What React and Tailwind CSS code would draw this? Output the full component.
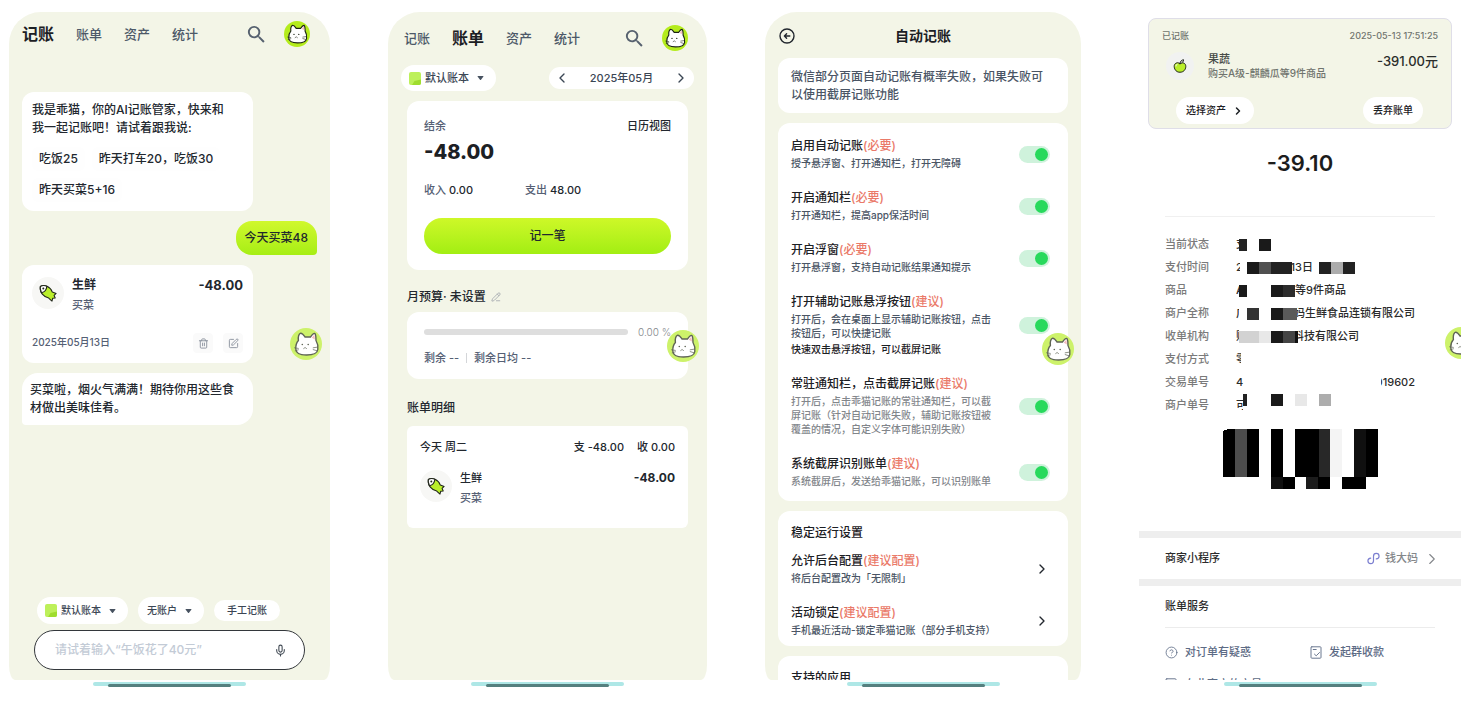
import { MdSearch } from 'react-icons/md';
import { ChevronLeft, ChevronRight, CircleHelp, Mic, PencilLine, SquarePen, Trash2 } from 'lucide-react';

const TABS = ['记账', '账单', '资产', '统计'];

const SETTINGS = [
    { id: 'auto', title: '启用自动记账', tag: '(必要)', desc: '授予悬浮窗、打开通知栏，打开无障碍' },
    { id: 'notice', title: '开启通知栏', tag: '(必要)', desc: '打开通知栏，提高app保活时间' },
    { id: 'float', title: '开启浮窗', tag: '(必要)', desc: '打开悬浮窗，支持自动记账结果通知提示' },
    {
        id: 'assist',
        title: '打开辅助记账悬浮按钮',
        tag: '(建议)',
        desc: '打开后，会在桌面上显示辅助记账按钮，点击\n按钮后，可以快捷记账',
        extra: '快速双击悬浮按钮，可以截屏记账',
    },
    {
        id: 'resident',
        title: '常驻通知栏，点击截屏记账',
        tag: '(建议)',
        desc: '打开后，点击乖猫记账的常驻通知栏，可以截\n屏记账（针对自动记账失败，辅助记账按钮被\n覆盖的情况，自定义字体可能识别失败）',
        muted: true,
    },
    { id: 'system', title: '系统截屏识别账单', tag: '(建议)', desc: '系统截屏后，发送给乖猫记账，可以识别账单', muted: true },
];

const STABILITY = [
    { title: '允许后台配置', tag: '(建议配置)', desc: '将后台配置改为「无限制」' },
    { title: '活动锁定', tag: '(建议配置)', desc: '手机最近活动-锁定乖猫记账（部分手机支持）' },
];

// each value is a run of cells: text (optionally cut to a width), mosaic block, or gap
const DETAILS = [
    { label: '当前状态', cells: [{ text: '支', w: 3 }, { w: 8, c: '#222' }, { w: 12 }, { w: 12, c: '#1a1a1a' }] },
    {
        label: '支付时间',
        cells: [
            { text: '2', w: 4 }, { w: 7 }, { w: 12, c: '#1a1a1a' }, { w: 12, c: '#505050' }, { w: 21, c: '#222' },
            { text: '13日', w: 21, end: true }, { w: 6 }, { w: 12, c: '#222' }, { w: 12, c: '#acacac' }, { w: 12, c: '#222' },
        ],
    },
    {
        label: '商品',
        cells: [{ text: 'A', w: 3 }, { w: 8, c: '#1a1a1a' }, { w: 24 }, { w: 12, c: '#1a1a1a' }, { w: 12, c: '#2c2c2c' }, { text: '等9件商品' }],
    },
    {
        label: '商户全称',
        cells: [
            { text: '广', w: 3 }, { w: 8 }, { w: 12, c: '#333' }, { w: 12 }, { w: 12, c: '#1a1a1a' }, { w: 14, c: '#5a5a5a' },
            { text: '妈生鲜食品连锁有限公司', w: 118, end: true },
        ],
    },
    {
        label: '收单机构',
        cells: [
            { text: '财', w: 3 }, { w: 20, c: '#d2d2d2' }, { w: 12, c: '#e8e8e8' }, { w: 12, c: '#1a1a1a' }, { w: 12, c: '#444' }, { w: 3, c: '#111' },
            { text: '科技有限公司', w: 61, end: true },
        ],
    },
    { label: '支付方式', cells: [{ text: '零', w: 5 }] },
    { label: '交易单号', cells: [{ text: '4', w: 8 }, { w: 137 }, { text: '019602', w: 34, end: true }] },
    {
        label: '商户单号',
        raised: true,
        cells: [
            { text: '可', w: 7 }, { w: 4, c: '#222' }, { w: 24 }, { w: 12, c: '#1a1a1a' }, { w: 12 },
            { w: 12, c: '#e8e8e8' }, { w: 12 }, { w: 12, c: '#adadad' },
        ],
    },
];

function Cat({ className, bg = '#b4ec1c', line = '#1c2414' }) {
    return (
        <svg viewBox="0 0 32 32" className={className} aria-hidden="true">
            <circle cx="16" cy="16" r="16" fill={bg} />
            <path
                d="M5.800 21C5.600 17 7 14 8.400 12.500C8 9 8.800 6 10.800 5.200C12.600 5.200 14 7.500 15 9H20.500C21.500 7.500 22.800 5.500 24.600 5.400C26.200 6 25.800 10 26 12.500C27.500 15 28.300 18 27.800 21.500C27.300 25.500 24 27 16.500 27C9 27 6 25.500 5.800 21Z"
                fill="#fff"
                stroke={line}
                strokeWidth="1.400"
                strokeLinejoin="round"
            />
            <path d="M21.800 9.800l2.600-3.200.5 4.900z" fill="#f7bcc0" />
            <circle cx="12.300" cy="16.500" r=".8" fill={line} />
            <circle cx="18.200" cy="16.500" r=".8" fill={line} />
            <path d="M13.700 20.500l1.400-1 1.400 1M4.500 19.800l3.800.6M5.200 22.800l3.200-1M23.200 19.800l3.800-.6M23.200 21.600l3.800 1.200" fill="none" stroke={line} strokeWidth=".7" strokeLinecap="round" />
        </svg>
    );
}

function FloatingCat({ className }) {
    return (
        <button aria-label="乖猫助手" className={`absolute size-8 ${className}`}>
            <Cat className="size-8" bg="#cdf26a" line="#5f6455" />
        </button>
    );
}

function Fish() {
    return (
        <span className="flex size-8 shrink-0 items-center justify-center rounded-full bg-[#f7f7f5]">
            <svg viewBox="0 0 20 20" className="size-[18px]" fill="none" stroke="#20251a" strokeWidth="1.200" strokeLinejoin="round" strokeLinecap="round">
                <path d="M1.500 2.800C5.500 .3 12.500 2.500 14.800 9l4.200 1.500-2.200 2.200 1.200 2.800-2.800.4-.8 3.100-3.600-3.400C5.500 14.500 .2 9.500 1.500 2.800Z" fill="#b9ee2a" />
                <path d="M1.500 2.800C3.500 1.500 6.500 1.500 8.700 2.400 8.500 6 6.500 8.700 2.800 9.800 1.600 7.500 1.100 5.200 1.500 2.800Z" fill="#fff" />
                <circle cx="4.800" cy="4.900" r=".5" fill="#20251a" />
            </svg>
        </span>
    );
}

function Apple() {
    return (
        <span className="flex size-7 shrink-0 items-center justify-center rounded-full bg-[#f1f2f1]">
            <svg viewBox="0 0 16 16" className="size-4" stroke="#20251a" strokeLinejoin="round" strokeLinecap="round">
                <path d="M8 5.500C5.500 3.800 2 5 2.200 8.600 2.400 12 5 14.500 8 14.200c3.200.2 5.700-2.300 5.800-5.600C13.900 5 10.500 3.800 8 5.500Z" fill="#b9ee2a" />
                <path d="M8 5.500C8.200 3.500 9.500 2 11.500 1.700c.2 1.800-1.200 3.400-3.500 3.800Z" fill="#fff" />
                <path d="M4 8c0-1 .5-1.600 1.200-1.800" fill="none" stroke="#fff" />
            </svg>
        </span>
    );
}

function Caret() {
    return (
        <svg viewBox="0 0 8 5" className="ml-1 h-[4px] w-[7px] shrink-0" aria-hidden="true">
            <path d="M.8 0h6.400q.8.300.3 1L4.600 4.600q-.6.500-1.200 0L.5 1Q0 .3.800 0Z" fill="#475260" />
        </svg>
    );
}

function LedgerIcon() {
    return (
        <svg viewBox="0 0 12 13" className="h-[13px] w-3 shrink-0" aria-hidden="true">
            <rect width="12" height="13" rx="2" fill="#bdf05a" />
            <path d="M3 13l2.500-4L12 7.500V11a2 2 0 0 1-2 2Z" fill="#9fdd2e" />
        </svg>
    );
}

function Phone({ children, className = '' }) {
    return (
        <section className="flex min-h-0 min-w-0 flex-col items-center">
            <div className={`relative flex min-h-0 w-full flex-1 flex-col overflow-hidden ${className}`}>{children}</div>
            <div className="relative mt-0.5 h-1 w-[153px] shrink-0 rounded-full bg-[#aee7e6]">
                <div className="absolute inset-x-[15px] top-0.5 h-[3px] rounded-full bg-[#55807f]" />
            </div>
        </section>
    );
}

const FRAME = 'bg-[#f3f5e7] rounded-t-[32px] rounded-bl-[6px_15px] rounded-br-[6px_15px]';

function TopNav({ active, className }) {
    return (
        <header className={`flex items-center ${className}`}>
            <nav className="flex items-center gap-[22px]">
                {TABS.map((tab) => (
                    <a
                        key={tab}
                        href="#"
                        className={tab === active ? 'text-base leading-6 font-bold text-[#1c2024]' : 'text-[13px] leading-6 text-[#4d5968]'}
                    >
                        {tab}
                    </a>
                ))}
            </nav>
            <button aria-label="搜索" className="ml-auto">
                <MdSearch size={23} color="#56616f" />
            </button>
            <button aria-label="我的" className="ml-4">
                <Cat className="size-[26px]" />
            </button>
        </header>
    );
}

function PillSelect({ label, option, icon, className }) {
    return (
        <label className={`flex items-center gap-1 rounded-full bg-white text-[#3b4654] ${className}`}>
            {icon}
            <select aria-label={label} className="appearance-none bg-transparent outline-none">
                <option>{option}</option>
            </select>
            <Caret />
        </label>
    );
}

function ChatScreen() {
    return (
        <Phone className={FRAME}>
            <TopNav active="记账" className="pt-[9px] pr-5 pl-[13px]" />
            <main className="mt-[45px] flex flex-1 flex-col px-[13px] text-xs text-[#22272e]">
                <div className="w-[231px] rounded-xl bg-white px-2.5 py-[9px]">
                    <p className="leading-[18px] whitespace-nowrap">
                        我是乖猫，你的AI记账管家，快来和
                        <br />
                        我一起记账吧！请试着跟我说:
                    </p>
                    <div className="mt-2.5 flex flex-wrap gap-[7px]">
                        {['吃饭25', '昨天打车20，吃饭30', '昨天买菜5+16'].map((text) => (
                            <button key={text} className="h-6 rounded-md bg-[#fefefe] px-[7px] whitespace-nowrap">{text}</button>
                        ))}
                    </div>
                </div>
                <p className="mt-2.5 self-end rounded-2xl rounded-br-[4px] bg-linear-to-b from-[#d0f82c] to-[#a6ee14] px-[9px] py-2 leading-[18px]">
                    今天买菜48
                </p>
                <article className="mt-2.5 w-[231px] rounded-xl bg-white px-2.5 pt-3 pb-2.5">
                    <div className="flex items-start">
                        <Fish />
                        <div className="ml-2">
                            <h3 className="leading-4 font-bold">生鲜</h3>
                            <p className="mt-1 text-[11px] leading-4 text-[#556074]">买菜</p>
                        </div>
                        <strong className="ml-auto text-[13px] leading-4">-48.00</strong>
                    </div>
                    <div className="mt-5 flex items-center">
                        <time className="text-[10px] text-[#556074]">2025年05月13日</time>
                        <button aria-label="删除" className="ml-auto flex size-5 items-center justify-center rounded bg-[#fafafa] text-[#8a919c]">
                            <Trash2 size={11} />
                        </button>
                        <button aria-label="编辑" className="ml-2.5 flex size-5 items-center justify-center rounded bg-[#fafafa] text-[#8a919c]">
                            <SquarePen size={11} />
                        </button>
                    </div>
                </article>
                <p className="mt-2.5 w-[231px] rounded-2xl rounded-bl-[4px] bg-white px-2 py-2 leading-[18px] whitespace-nowrap">
                    买菜啦，烟火气满满！期待你用这些食
                    <br />
                    材做出美味佳肴。
                </p>
            </main>
            <footer className="px-[25px] pb-2.5">
                <div className="mb-1.5 ml-[3px] flex items-center gap-2.5 text-[10px]">
                    <PillSelect label="账本" option="默认账本" icon={<LedgerIcon />} className="h-[27px] pr-3 pl-2" />
                    <PillSelect label="账户" option="无账户" className="h-[27px] pr-3 pl-[9px]" />
                    <button className="h-[21px] rounded-full bg-white px-[13px] text-[#3b4654]">手工记账</button>
                </div>
                <div className="flex h-10 items-center rounded-full border border-[#33373b] bg-white pr-[17px] pl-5">
                    <input
                        aria-label="记账内容"
                        placeholder="请试着输入“午饭花了40元”"
                        className="min-w-0 flex-1 bg-transparent text-xs outline-none placeholder:text-[#c3cbd6]"
                    />
                    <button aria-label="语音输入">
                        <Mic size={13} color="#3f4852" />
                    </button>
                </div>
            </footer>
            <FloatingCat className="top-[316px] right-2" />
        </Phone>
    );
}

function BillScreen() {
    return (
        <Phone className={FRAME}>
            <TopNav active="账单" className="pt-[13px] pr-[19px] pl-4" />
            <div className="mt-3.5 flex items-center justify-between px-[13px] text-[11px] text-[#3b4654]">
                <PillSelect label="账本" option="默认账本" icon={<LedgerIcon />} className="h-[26px] pr-3 pl-2" />
                <div className="flex h-[22px] w-[145px] items-center justify-between rounded-full bg-white px-[5px]">
                    <button aria-label="上个月"><ChevronLeft size={16} /></button>
                    <span>2025年05月</span>
                    <button aria-label="下个月"><ChevronRight size={16} /></button>
                </div>
            </div>
            <main className="mt-2.5 px-[19px] text-[#22272e]">
                <section className="rounded-xl bg-white px-[17px] py-4">
                    <div className="flex justify-between text-[11px] leading-[18px]">
                        <span className="text-[#556074]">结余</span>
                        <a href="#">日历视图</a>
                    </div>
                    <p className="mt-1 text-xl leading-[26px] font-extrabold text-[#1c2024]">-48.00</p>
                    <dl className="mt-4 grid grid-cols-[101px_1fr] text-[11px] leading-[18px]">
                        <div className="flex gap-[3px]">
                            <dt className="text-[#556074]">收入</dt>
                            <dd>0.00</dd>
                        </div>
                        <div className="flex gap-[3px]">
                            <dt className="text-[#556074]">支出</dt>
                            <dd>48.00</dd>
                        </div>
                    </dl>
                    <button className="mt-[19px] h-9 w-full rounded-full bg-linear-to-b from-[#cef828] to-[#a2ee12] text-xs">记一笔</button>
                </section>
                <h2 className="mt-[18px] flex items-center gap-[5px] text-xs leading-[18px]">
                    月预算· 未设置
                    <button aria-label="编辑预算"><PencilLine size={10} color="#a3a8ae" /></button>
                </h2>
                <section className="mt-1.5 rounded-xl bg-white px-[17px] py-3 text-[#556074]">
                    <div className="flex items-center gap-2.5">
                        <div className="h-1.5 flex-1 rounded-full bg-[#dedede]" />
                        <span className="text-[10px] leading-4 font-light text-[#83878c]">0.00 %</span>
                    </div>
                    <p className="mt-[9px] flex items-center gap-[7px] text-[11px] leading-[18px]">
                        <span>剩余 --</span>
                        <i className="h-2.5 w-px bg-[#d4d6d9]" />
                        <span>剩余日均 --</span>
                    </p>
                </section>
                <h2 className="mt-5 text-xs leading-[18px]">账单明细</h2>
                <section className="mt-[9px] rounded-md bg-white px-[13px] pt-3 pb-[22px] text-[11px]">
                    <div className="flex gap-[13px] leading-[18px]">
                        <span className="mr-auto">今天 周二</span>
                        <span>支 -48.00</span>
                        <span>收 0.00</span>
                    </div>
                    <div className="mt-3.5 flex items-start">
                        <Fish />
                        <div className="ml-2">
                            <h3 className="leading-4">生鲜</h3>
                            <p className="mt-1 leading-4 text-[#556074]">买菜</p>
                        </div>
                        <strong className="ml-auto text-xs leading-4">-48.00</strong>
                    </div>
                </section>
            </main>
            <FloatingCat className="top-[318px] right-2" />
        </Phone>
    );
}

function SettingText({ id, title, tag, desc, extra, muted }) {
    return (
        <div className="whitespace-pre">
            <label htmlFor={id} className="block text-xs leading-4 text-[#1c2024]">
                {title}
                <span className="text-[#ea7a69]">{tag}</span>
            </label>
            <p className={`mt-0.5 text-[10px] leading-[14px] ${muted ? 'text-[#82868b]' : 'text-[#4a5565]'}`}>{desc}</p>
            {extra && <p className="mt-0.5 text-[10px] leading-[14px] text-[#1c2024]">{extra}</p>}
        </div>
    );
}

function SettingsScreen() {
    return (
        <Phone className={FRAME}>
            <header className="grid grid-cols-[16px_1fr_16px] items-center px-3.5 pt-3">
                <button aria-label="返回">
                    <svg viewBox="0 0 16 16" className="size-4" fill="none" stroke="#22272e" strokeWidth="1.400" strokeLinecap="round" strokeLinejoin="round">
                        <circle cx="8" cy="8" r="7" />
                        <path d="M10.800 8H5.600M7.600 5.800L5.400 8l2.200 2.200" />
                    </svg>
                </button>
                <h1 className="text-center text-sm leading-6 font-bold text-[#1c2024]">自动记账</h1>
            </header>
            <main className="mt-2.5 flex flex-col gap-2.5 px-[13px]">
                <p className="shrink-0 rounded-xl bg-white px-[13px] pt-2.5 pb-[9px] text-xs leading-[18px] whitespace-nowrap text-[#4a5565]">
                    微信部分页面自动记账有概率失败，如果失败可
                    <br />
                    以使用截屏记账功能
                </p>
                <section className="flex shrink-0 flex-col gap-5 rounded-xl bg-white pt-[15px] pr-[18px] pb-[13px] pl-[13px]">
                    {SETTINGS.map((item) => (
                        <div key={item.id} className="flex items-center justify-between">
                            <SettingText {...item} />
                            <input
                                id={item.id}
                                type="checkbox"
                                defaultChecked
                                className="flex h-[17px] w-[31px] shrink-0 appearance-none items-center rounded-full bg-gray-200 px-0.5 before:block before:size-[13px] before:rounded-full before:bg-white checked:justify-end checked:bg-[#cff2dc] checked:before:bg-[#28d95c]"
                            />
                        </div>
                    ))}
                </section>
                <section className="shrink-0 rounded-xl bg-white pt-3.5 pr-[18px] pb-[9px] pl-[13px]">
                    <h2 className="text-xs leading-4 text-[#1c2024]">稳定运行设置</h2>
                    <div className="mt-3 flex flex-col gap-5">
                        {STABILITY.map((item) => (
                            <button key={item.title} className="flex items-center justify-between text-left">
                                <span className="whitespace-pre">
                                    <span className="block text-xs leading-4 text-[#1c2024]">
                                        {item.title}
                                        <span className="text-[#ea7a69]">{item.tag}</span>
                                    </span>
                                    <span className="mt-0.5 block text-[10px] leading-[14px] text-[#4a5565]">{item.desc}</span>
                                </span>
                                <ChevronRight size={16} color="#22272e" />
                            </button>
                        ))}
                    </div>
                </section>
                <section className="shrink-0 rounded-t-xl bg-white px-[13px] py-3.5">
                    <h2 className="text-xs leading-4 text-[#1c2024]">支持的应用</h2>
                </section>
            </main>
            <FloatingCat className="top-[321px] right-[7px]" />
        </Phone>
    );
}

function Redacted({ cells }) {
    return cells.map((cell, i) => {
        if (cell.text) {
            return (
                <span
                    key={i}
                    className={`flex shrink-0 overflow-hidden whitespace-nowrap ${cell.end ? 'justify-end' : ''}`}
                    style={cell.w ? { width: cell.w } : undefined}
                >
                    {cell.text}
                </span>
            );
        }
        return <i key={i} className="h-3 shrink-0" style={{ width: cell.w, background: cell.c }} />;
    });
}

function Barcode() {
    return (
        <svg viewBox="0 0 156 60" className="mt-3 ml-[84px] h-[60px] w-[156px] shrink-0" shapeRendering="crispEdges" aria-label="条形码">
            <path d="M0 2L5 0H12V48H0ZM24 0H36V48H24ZM48 0H60V48H48ZM72 0H96V48H72ZM143 0H155V48H143ZM60 48H72V60H60ZM95 48H107V60H95ZM119 48H143V60H119Z" />
            <path d="M12 0H24V48H12Z" fill="#4d4d4d" />
            <path d="M96 0H107V48H96Z" fill="#282828" />
            <path d="M107 0H119V48H107Z" fill="#f4f4f4" />
            <path d="M131 0H143V48H131ZM48 48H60V60H48Z" fill="#101010" />
            <path d="M83 48H95V60H83Z" fill="#1c1c1c" />
        </svg>
    );
}

function MiniProgramIcon() {
    return (
        <svg viewBox="0 0 14 14" className="size-[13px]" fill="none" stroke="#7c7fd0" strokeWidth="1.300" strokeLinecap="round">
            <path d="M4 6.500C2.300 6.700 1 7.800 1 9.500 1 11.200 2.300 12.500 4 12.500s3-1.300 3-3v-5c0-1.700 1.300-3 3-3s3 1.300 3 3-1.300 2.800-3 3" />
        </svg>
    );
}

function DocIcon({ check }) {
    return (
        <svg viewBox="0 0 12 13" className="h-[13px] w-3" fill="none" stroke="#6b7890" strokeLinecap="round" strokeLinejoin="round">
            <rect x="1" y=".8" width="10" height="11.400" rx=".8" />
            <path d="M3.200 3.500h3" />
            {check && <path d="M4.500 8.200l1.700 1.600 3.300-3.300" />}
        </svg>
    );
}

function PaymentScreen() {
    return (
        <Phone>
            <section className="mx-[9px] mt-1.5 shrink-0 rounded-lg border border-[#dfdee8] bg-[#f3f5e7] px-[13px] pt-2.5 pb-1">
                <div className="flex justify-between text-[9px] leading-[14px] text-[#70746e]">
                    <span>已记账</span>
                    <time>2025-05-13 17:51:25</time>
                </div>
                <div className="mt-[9px] flex items-start">
                    <span className="ml-1"><Apple /></span>
                    <div className="ml-3.5">
                        <h3 className="text-[11px] leading-[14px] text-[#474b48]">果蔬</h3>
                        <p className="text-[10px] leading-[14px] text-[#70746e]">购买A级-麒麟瓜等9件商品</p>
                    </div>
                    <strong className="ml-auto text-[13px] leading-[18px] font-medium text-[#2a2d2a]">-391.00元</strong>
                </div>
                <div className="mt-[17px] flex items-center justify-between pr-[15px] pl-3.5 text-[10px] text-[#1c2024]">
                    <button className="flex h-[27px] items-center gap-1.5 rounded-full bg-white px-2.5">
                        选择资产
                        <ChevronRight size={12} strokeWidth={3} />
                    </button>
                    <button className="h-[27px] rounded-full bg-white px-2.5">丢弃账单</button>
                </div>
            </section>
            <p className="mt-[19px] text-center text-[22px] leading-[30px] font-semibold text-[#1c1c1c]">-39.10</p>
            <hr className="mx-[26px] mt-[38px] border-[#f0f0f0]" />
            <dl className="mx-[26px] mt-4 text-[11px] leading-[23px] text-[#2b2b2b]">
                {DETAILS.map(({ label, cells, raised }) => (
                    <div key={label} className="flex">
                        <dt className="w-[71px] shrink-0 text-[#7a7a7a]">{label}</dt>
                        <dd className={raised ? 'flex items-start' : 'flex items-center'}><Redacted cells={cells} /></dd>
                    </div>
                ))}
            </dl>
            <Barcode />
            <div className="mt-[42px] flex shrink-0 items-center border-y-[7px] border-[#eee] px-[26px] text-[11px] leading-[41px] text-[#2b2b2b]">
                商家小程序
                <a href="#" className="ml-auto flex items-center gap-[5px] text-[#84878b]">
                    <MiniProgramIcon />
                    钱大妈
                    <ChevronRight size={18} strokeWidth={1.5} className="-mr-1.5" />
                </a>
            </div>
            <section className="mx-[26px] shrink-0 text-[11px] text-[#5d6b85]">
                <h2 className="border-b border-[#ececec] leading-[41px] text-[#2b2b2b]">账单服务</h2>
                <div className="mt-3.5 grid grid-cols-[145px_1fr] gap-y-3 leading-5">
                    <a href="#" className="flex items-center gap-[7px]">
                        <CircleHelp size={13} strokeWidth={1.5} />
                        对订单有疑惑
                    </a>
                    <a href="#" className="flex items-center gap-[7px]">
                        <DocIcon check />
                        发起群收款
                    </a>
                    <a href="#" className="flex items-center gap-2">
                        <DocIcon />
                        在此商户的交易
                    </a>
                </div>
            </section>
            <FloatingCat className="top-[315px] -right-4" />
        </Phone>
    );
}

export default function App() {
    return (
        <div className="grid h-screen grid-cols-[321fr_319fr_316fr_322fr] grid-rows-[minmax(0,1fr)] gap-[58px] bg-white pt-3 pr-0.5 pb-[17px] pl-[9px] font-['Inter','Noto_Sans_CJK_SC',sans-serif] font-medium">
            <ChatScreen />
            <BillScreen />
            <SettingsScreen />
            <PaymentScreen />
        </div>
    );
}
